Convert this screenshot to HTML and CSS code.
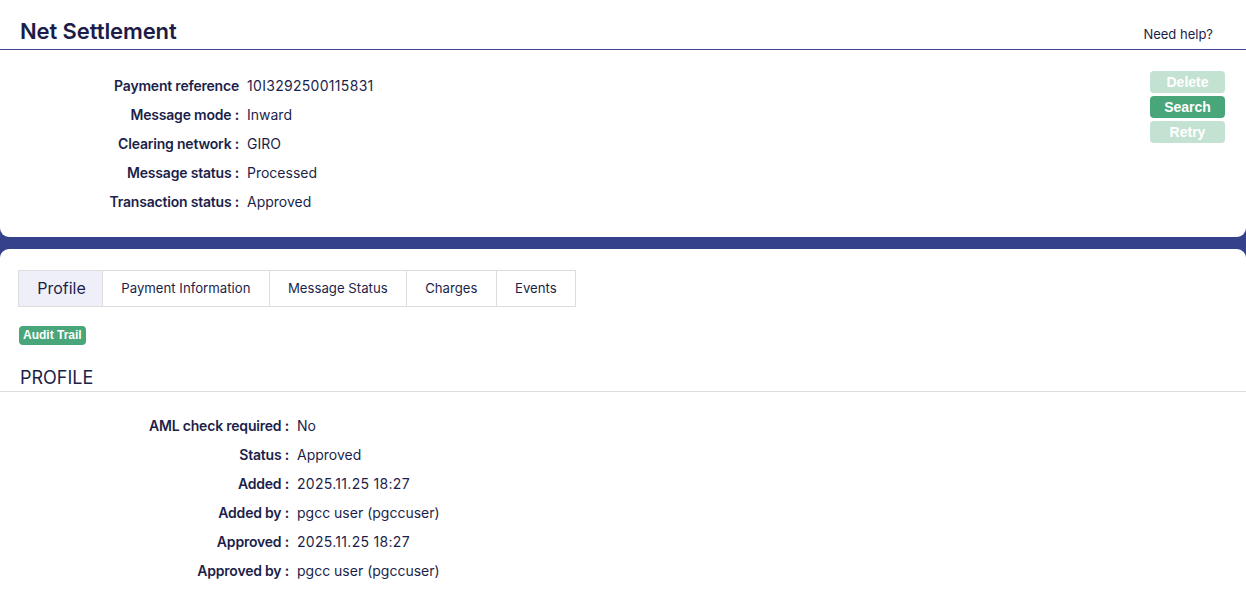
FILE: index.html
```html
<!DOCTYPE html>
<html>
<head>
<meta charset="utf-8">
<link rel="stylesheet" href="styles.css">
</head>
<body>
<div class="card card-top">
  <div class="header">
    <h1 class="title">Net Settlement</h1>
    <a class="help">Need help?</a>
  </div>
  <div class="summary">
    <div class="fields fields-summary">
      <div class="label">Payment reference</div><div class="value num">10I3292500115831</div>
      <div class="label">Message mode :</div><div class="value">Inward</div>
      <div class="label">Clearing network :</div><div class="value">GIRO</div>
      <div class="label">Message status :</div><div class="value">Processed</div>
      <div class="label">Transaction status :</div><div class="value">Approved</div>
    </div>
    <div class="actions">
      <button class="btn btn-disabled">Delete</button>
      <button class="btn">Search</button>
      <button class="btn btn-disabled">Retry</button>
    </div>
  </div>
</div>
<div class="card card-bottom">
  <div class="tabs">
    <div class="tab tab-active">Profile</div>
    <div class="tab">Payment Information</div>
    <div class="tab">Message Status</div>
    <div class="tab">Charges</div>
    <div class="tab">Events</div>
  </div>
  <div class="badge-row"><span class="badge">Audit Trail</span></div>
  <h2 class="section-title">PROFILE</h2>
  <div class="fields fields-profile">
    <div class="label">AML check required :</div><div class="value">No</div>
    <div class="label">Status :</div><div class="value">Approved</div>
    <div class="label">Added :</div><div class="value num">2025.11.25 18:27</div>
    <div class="label">Added by :</div><div class="value">pgcc user (pgccuser)</div>
    <div class="label">Approved :</div><div class="value num">2025.11.25 18:27</div>
    <div class="label">Approved by :</div><div class="value">pgcc user (pgccuser)</div>
  </div>
</div>
</body>
</html>
```
FILE: styles.css
```css
html, body {
  margin: 0;
  padding: 0;
}
body {
  background: #36418b;
  font-family: Inter, "Noto Sans", sans-serif;
  color: #1c1f4a;
  height: 600px;
  overflow: hidden;
}
.card {
  background: #fff;
}
.card-top {
  height: 237px;
  border-radius: 0 0 9px 9px;
}
.card-bottom {
  margin-top: 12px;
  padding-top: 21px;
  border-radius: 9px 9px 0 0;
  height: 330px;
}
.header {
  height: 49px;
  border-bottom: 1px solid #3b4590;
  display: flex;
  align-items: flex-end;
  justify-content: space-between;
  padding: 0 33px 0 20px;
}
.title {
  margin: 0 0 5px;
  font-size: 22px;
  font-weight: 600;
  color: #1b1d48;
  letter-spacing: -0.1px;
}
.help {
  font-size: 13px;
  color: #1c1f4a;
  margin-bottom: 7px;
}
.summary {
  display: flex;
  justify-content: space-between;
  padding: 21px 21px 0 0;
}
.fields {
  display: grid;
  row-gap: 0;
  column-gap: 8px;
  font-size: 14px;
  line-height: 29px;
}
.fields-summary {
  grid-template-columns: 239px auto;
}
.fields-profile {
  grid-template-columns: 289px auto;
  padding-top: 19px;
}
.label {
  text-align: right;
  font-weight: 600;
  letter-spacing: -0.2px;
  color: #1c1f4a;
}
.value {
  color: #1c1f4a;
}
.num {
  letter-spacing: 0.3px;
}
.actions {
  display: flex;
  flex-direction: column;
  gap: 3px;
  width: 75px;
}
.btn {
  height: 22px;
  border: none;
  border-radius: 4px;
  background: #49a67a;
  color: #fff;
  font-family: "Liberation Sans", Arial, sans-serif;
  font-weight: 700;
  font-size: 14px;
  padding: 0;
}
.btn-disabled {
  background: #c3e2d2;
}
.tabs {
  display: flex;
  margin-left: 18px;
}
.tab {
  height: 35px;
  line-height: 35px;
  border: 1px solid #dddddd;
  border-left: none;
  padding: 0 18.25px;
  font-size: 13.2px;
  color: #1c1f4a;
}
.tab:first-child {
  border-left: 1px solid #dddddd;
}
.tab-active {
  background: #eeeff8;
  font-size: 16px;
  width: 46.5px;
}
.badge-row {
  margin: 16px 0 0 19px;
  height: 19px;
}
.badge {
  display: inline-block;
  height: 19px;
  line-height: 19px;
  padding: 0 4px;
  border-radius: 4px;
  background: #49a67a;
  color: #fff;
  font-family: "Liberation Sans", Arial, sans-serif;
  font-weight: 700;
  font-size: 12px;
}
.section-title {
  margin: 0;
  padding: 26px 20px 3px;
  font-size: 18px;
  font-weight: 400;
  line-height: 20px;
  border-bottom: 1px solid #dddddd;
  color: #1c1f4a;
}
```
